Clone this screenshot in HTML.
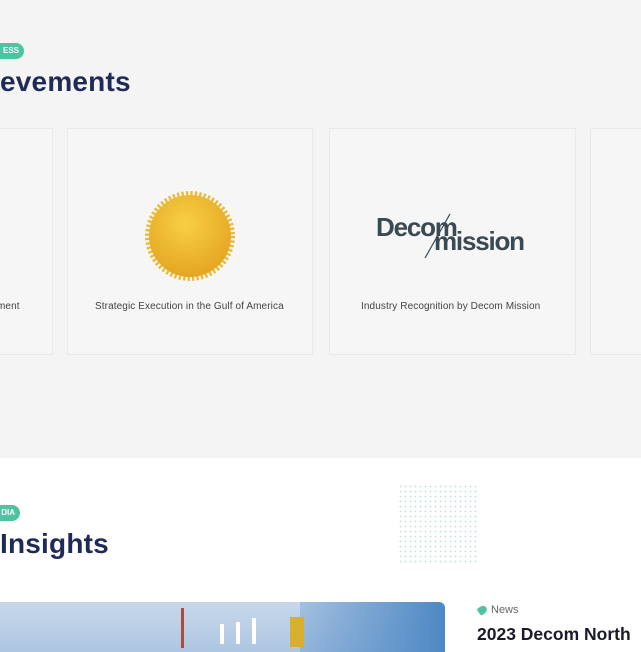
<!DOCTYPE html>
<html><head><meta charset="utf-8"><style>
*{margin:0;padding:0;box-sizing:border-box}
body{width:641px;height:641px;overflow:hidden;position:relative;background:#fff;font-family:"Liberation Sans",sans-serif}
.gray{position:absolute;left:0;top:0;width:641px;height:458px;background:#f4f4f4}
.badge{position:absolute;height:16px;background:#4fc3a1;color:#fff;font-size:8px;font-weight:bold;line-height:16px;border-radius:0 8px 8px 0;padding:0 5px 0 0;text-align:right}
h2{position:absolute;left:0;color:#1f2a56;font-size:28px;font-weight:bold;letter-spacing:0.2px}
.card{position:absolute;top:128px;height:227px;background:#f6f6f6;border:1px solid #e9e9e9}
.cap{position:absolute;top:301px;font-size:10px;letter-spacing:0.1px;color:#444;white-space:nowrap}
</style></head><body>
<div class="gray"></div>
<div class="badge" style="left:0;top:43px;width:24px">ESS</div>
<h2 style="top:66px">evements</h2>
<div class="card" style="left:-10px;width:63px"></div>
<div class="cap" style="left:-3px">ment</div>
<div class="card" style="left:67px;width:246px"></div>
<svg style="position:absolute;left:145px;top:191px" width="90" height="90" viewBox="0 0 90 90">
<defs><radialGradient id="g" cx="45%" cy="35%" r="65%"><stop offset="0" stop-color="#f7cf45"/><stop offset="1" stop-color="#e5a622"/></radialGradient></defs>
<circle cx="45" cy="45" r="42" fill="none" stroke="#edb830" stroke-width="6" stroke-dasharray="2.2 2.2"/>
<circle cx="45" cy="45" r="41" fill="url(#g)"/>
</svg>
<div class="cap" style="left:95px">Strategic Execution in the Gulf of America</div>
<div class="card" style="left:329px;width:247px"></div>
<div style="position:absolute;left:376px;top:212px;font-size:26px;font-weight:bold;color:#3a4a52;letter-spacing:-1.2px">Decom</div>
<div style="position:absolute;left:434px;top:226px;font-size:26px;font-weight:bold;color:#3a4a52;letter-spacing:-1.2px">mission</div>
<svg style="position:absolute;left:420px;top:212px" width="50" height="50"><line x1="5" y1="46" x2="30" y2="2" stroke="#3a4a52" stroke-width="1.2"/></svg>
<div class="cap" style="left:361px">Industry Recognition by Decom Mission</div>
<div class="card" style="left:590px;width:60px"></div>
<div class="badge" style="left:0;top:505px;width:20px">DIA</div>
<h2 style="top:528px">Insights</h2>
<div style="position:absolute;left:398px;top:484px;width:80px;height:80px;background-image:radial-gradient(circle,#bfe3d9 0.7px,transparent 1px);background-size:5px 5px"></div>
<div style="position:absolute;left:0;top:602px;width:445px;height:50px;border-radius:0 6px 0 0;background:linear-gradient(180deg,#c8d8ea,#aec6e2);overflow:hidden">
<div style="position:absolute;left:300px;top:0;width:145px;height:50px;background:linear-gradient(90deg,rgba(80,140,200,.3),#4e88c4)"></div>
<div style="position:absolute;left:181px;top:6px;width:3px;height:40px;background:#b04a3a"></div>
<div style="position:absolute;left:220px;top:22px;width:4px;height:20px;background:#fff"></div>
<div style="position:absolute;left:236px;top:20px;width:4px;height:22px;background:#fff"></div>
<div style="position:absolute;left:252px;top:16px;width:4px;height:26px;background:#fff"></div>
<div style="position:absolute;left:290px;top:15px;width:14px;height:30px;background:#d8b030"></div>
</div>
<div style="position:absolute;left:478px;top:606px;width:9px;height:8px;background:#4fc3a1;border-radius:2px 50% 50% 2px;transform:rotate(-35deg)"></div>
<div style="position:absolute;left:491px;top:604px;font-size:11px;color:#666">News</div>
<div style="position:absolute;left:477px;top:624px;font-size:17.5px;font-weight:bold;color:#1a1a2a;white-space:nowrap">2023 Decom North</div>
</body></html>
